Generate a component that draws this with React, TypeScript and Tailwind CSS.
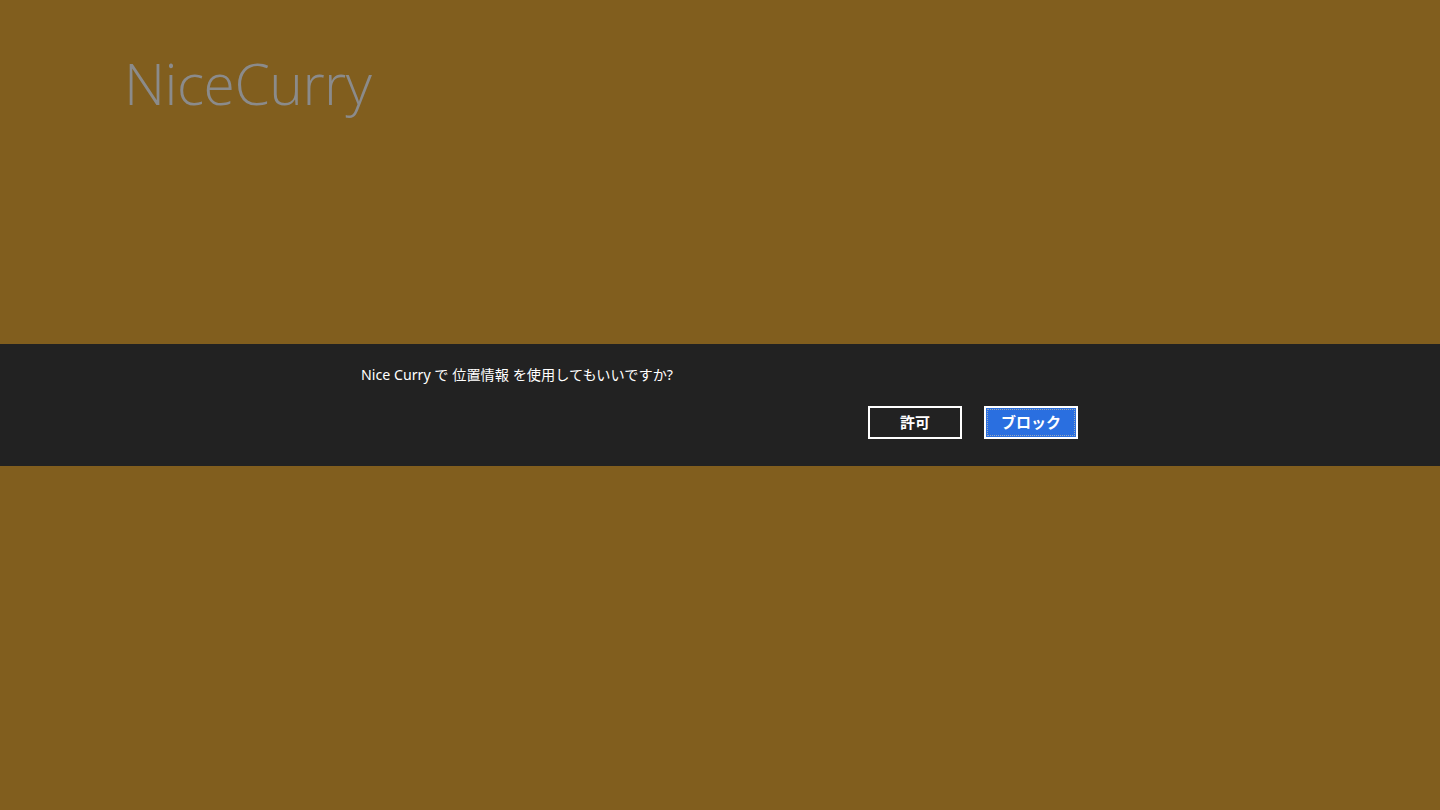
export default function App() {
  return (
    <div className="h-[810px] w-[1440px] flex flex-col bg-[#815e1e] overflow-hidden" style={{ fontFamily: '"Open Sans", "Noto Sans CJK JP", sans-serif' }}>
      {/* app title */}
      <div className="h-[344px] pl-[124px] pt-[47px]">
        <h1 className="text-[57px] leading-[72px] font-light text-[#8b8b8b] tracking-[-0.5px]">NiceCurry</h1>
      </div>

      {/* location permission prompt */}
      <div className="h-[122px] bg-[#222222] flex justify-start pl-[361px]">
        <div className="w-[717px] flex flex-col pt-[21px]">
          <p className="text-[14.2px] leading-5 text-white" style={{ fontFamily: '"Noto Sans", "Noto Sans CJK JP", sans-serif' }}>
            Nice Curry で 位置情報 を使用してもいいですか?
          </p>
          <div className="flex justify-end gap-[22px] mt-[21px]">
            <button className="w-[94px] h-[33px] border-2 border-white bg-[#222222] text-white text-[15px] font-bold" style={{ fontFamily: '"Noto Sans CJK JP", sans-serif' }}>
              許可
            </button>
            <button className="w-[94px] h-[33px] border-2 border-white bg-[#2a6fe0] p-[1px] text-white text-[15px] font-bold" style={{ fontFamily: '"Noto Sans CJK JP", sans-serif' }}>
              <span className="flex h-full w-full items-center justify-center border border-dotted border-[#9aa6b8]">ブロック</span>
            </button>
          </div>
        </div>
      </div>

      <div className="flex-1" />
    </div>
  );
}
